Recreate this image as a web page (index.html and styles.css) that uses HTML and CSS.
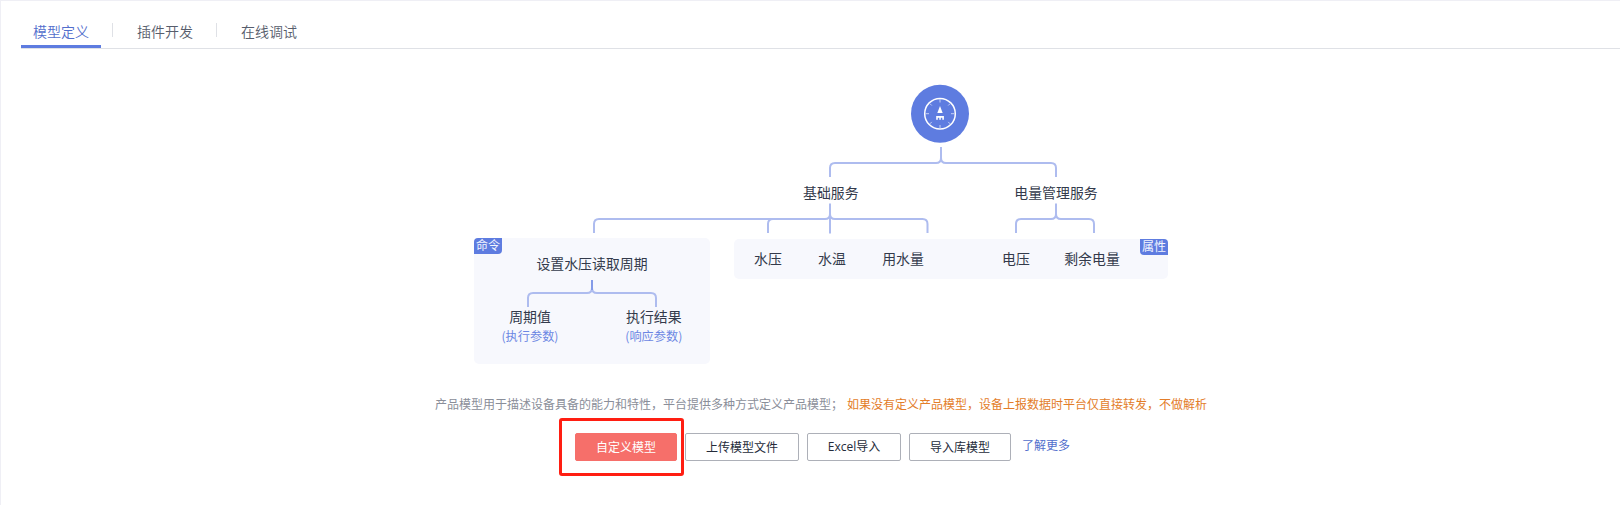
FILE: index.html
```html
<!DOCTYPE html>
<html lang="zh-CN">
<head>
<meta charset="utf-8">
<title>模型定义</title>
<link rel="stylesheet" href="styles.css">
</head>
<body>
<main class="page">
  <nav class="tabs">
    <a class="tab active">模型定义</a>
    <a class="tab">插件开发</a>
    <a class="tab">在线调试</a>
  </nav>
  <section class="diagram">
    <svg class="tree" width="694" height="280" viewBox="474 84 694 280">
      <rect class="panel" x="474" y="238" width="236" height="126" rx="5"/>
      <rect class="panel" x="734" y="239" width="434" height="40" rx="5"/>
      <path class="badge" d="M478 238H502V250Q502 254 498 254H474V242Q474 238 478 238Z"/>
      <path class="badge" d="M1140 239H1164Q1168 239 1168 243V255H1144Q1140 255 1140 251Z"/>
      <g class="line">
        <path d="M941 147V158Q941 163 936 163H835Q830 163 830 168V177M941 158Q941 163 946 163H1051Q1056 163 1056 168V177"/>
        <path d="M830 203.500V233.500M830 214Q830 219 825 219H599Q594 219 594 224V233M773 219Q768 219 768 224V233M830 214Q830 219 835 219H922.500Q927.500 219 927.500 224V233"/>
        <path d="M1056 203.500V214Q1056 219 1051 219H1021Q1016 219 1016 224V233M1056 214Q1056 219 1061 219H1089Q1094 219 1094 224V233"/>
        <path d="M592 288Q592 293 587 293H533Q528 293 528 298V307M592 288Q592 293 597 293H651Q656 293 656 298V307"/>
      </g>
      <path class="stem" d="M592 280V290"/>
      <circle class="device" cx="940" cy="113.700" r="29"/>
      <circle class="dial" cx="940" cy="113.700" r="15.300"/>
      <path class="ticks" d="M940 99V102.500M940 125V128.500M925.500 113.700H929M951 113.700H954.500M929.800 103.500L931.800 105.500M950.200 103.500L948.200 105.500M929.800 123.900L931.800 121.900M950.200 123.900L948.200 121.900"/>
      <path class="needle" d="M940 106L942.700 113H937.300ZM936.200 116H943.900V119.800H942.300V117.800H940.800V119.800H939.300V117.800H937.800V119.800H936.200Z"/>
      <g class="label">
        <text x="830.800" y="198">基础服务</text>
        <text x="1056" y="198">电量管理服务</text>
        <text x="592" y="269">设置水压读取周期</text>
        <text x="530" y="322">周期值</text>
        <text x="653.800" y="322">执行结果</text>
        <text x="768" y="264">水压</text>
        <text x="832" y="264">水温</text>
        <text x="903" y="264">用水量</text>
        <text x="1016" y="264">电压</text>
        <text x="1092" y="264">剩余电量</text>
      </g>
      <g class="param">
        <text x="530" y="340.500">(执行参数)</text>
        <text x="653.800" y="340.500">(响应参数)</text>
      </g>
      <g class="tag">
        <text x="488" y="250.300">命令</text>
        <text x="1154" y="251.300">属性</text>
      </g>
    </svg>
  </section>
  <p class="intro"><span>产品模型用于描述设备具备的能力和特性，平台提供多种方式定义产品模型；</span><span class="warn">如果没有定义产品模型，设备上报数据时平台仅直接转发，不做解析</span></p>
  <div class="actions">
    <div class="highlight"><button class="btn primary">自定义模型</button></div>
    <button class="btn upload">上传模型文件</button>
    <button class="btn excel">Excel导入</button>
    <button class="btn">导入库模型</button>
    <a class="more">了解更多</a>
  </div>
</main>
</body>
</html>
```
FILE: styles.css
```css
* { box-sizing: border-box; }
body {
  margin: 0;
  background: #fff;
  font-family: "Noto Sans CJK SC", sans-serif;
  overflow: hidden;
}
.page {
  height: 505px;
  border-top: 1px solid #efeff5;
  border-left: 1px solid #efeff5;
}
.tabs {
  display: flex;
  height: 48px;
  margin-left: 20px;
  border-bottom: 1px solid #dfe1e6;
  font-size: 14px;
  font-weight: 350;
  color: #575d6c;
}
.tab {
  display: flex;
  align-items: center;
  height: 47px;
  padding: 16px 12px 3px;
  line-height: 28px;
}
.tab + .tab { margin-left: 24px; }
.tab:not(:last-child)::after {
  content: "";
  width: 1px;
  height: 14px;
  margin: -3px -24px 0 23px;
  background: #dfe1e6;
}
.tab.active {
  width: 80px;
  color: #526ecc;
  border-bottom: 3px solid #5e7ce0;
  padding-bottom: 0;
}
.tab.active::after { flex: none; }
.diagram { padding: 35px 0 0 473px; }
.tree { display: block; }
.panel { fill: #f7f8fd; }
.badge, .device { fill: #5e7ce0; }
.line { fill: none; stroke: #aebcef; stroke-width: 2; }
.stem { stroke: #849be8; stroke-width: 2; }
.dial { fill: none; stroke: #fff; stroke-width: 1.5; }
.ticks { fill: none; stroke: #c5d0f5; stroke-width: 1; }
.needle { fill: #fff; }
.tree text { text-anchor: middle; }
.label { font-size: 13.9px; fill: #333a4b; }
.param { font-size: 12.2px; fill: #6c87e3; }
.tag { font-size: 12px; fill: #f2f5ff; }
.intro {
  display: flex;
  gap: 4px;
  margin: 30px 0 0 434px;
  font-size: 12px;
  line-height: 20px;
  color: #8a8e99;
  white-space: nowrap;
}
.warn { color: #e37d29; }
.actions {
  display: flex;
  align-items: center;
  height: 58px;
  margin: 4px 0 0 558px;
}
.highlight {
  width: 125px;
  height: 58px;
  padding: 12px 0 0 13px;
  border: 3px solid #ff1e12;
  border-radius: 3px;
}
.btn {
  width: 102px;
  height: 28px;
  padding: 0;
  margin-right: 8px;
  border: 1px solid #adb0b8;
  border-radius: 2px;
  background: #fff;
  color: #252b3a;
  font: 12px/26px "Noto Sans CJK SC", sans-serif;
}
.btn.primary {
  display: block;
  margin: 0;
  border-color: #f66f6a;
  background: #f66f6a;
  color: #fff;
}
.upload { width: 114px; margin-left: 1px; }
.excel { width: 94px; font-family: "Open Sans", "Noto Sans CJK SC", sans-serif; }
.more {
  margin: -4px 0 0 3px;
  font-size: 12px;
  line-height: 18px;
  color: #526ecc;
}
```
